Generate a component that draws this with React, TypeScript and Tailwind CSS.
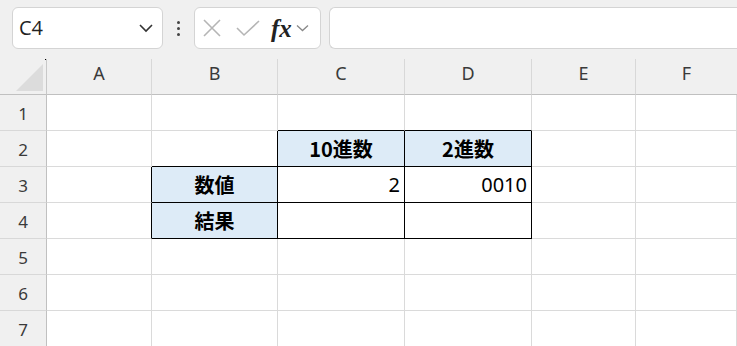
import React from "react";

const cols = ["A", "B", "C", "D", "E", "F"];
const rows = [1, 2, 3, 4, 5, 6, 7];

type CellSpec = { text?: string; blue?: boolean; bold?: boolean; right?: boolean; br?: boolean; bb?: boolean };

const table: Record<string, CellSpec> = {
  C2: { text: "10進数", blue: true, bold: true, br: true, bb: true },
  D2: { text: "2進数", blue: true, bold: true, br: true, bb: true },
  B3: { text: "数値", blue: true, bold: true, br: true, bb: true },
  C3: { text: "2", right: true, br: true, bb: true },
  D3: { text: "0010", right: true, br: true, bb: true },
  B4: { text: "結果", blue: true, bold: true, br: true, bb: true },
  C4: { br: true, bb: true },
  D4: { br: true, bb: true },
  C1: { bb: true },
  D1: { bb: true },
  B2: { br: true, bb: true },
  A3: { br: true },
  A4: { br: true },
};

function Cell({ id }: { id: string }) {
  const s = table[id] || {};
  return (
    <div
      className={
        "box-border border-r border-b flex items-center px-1 text-[20px] text-black " +
        (s.br ? "border-r-black " : "border-r-[#dadada] ") +
        (s.bb ? "border-b-black " : "border-b-[#dadada] ") +
        (s.blue ? "bg-[#ddebf7] " : "bg-white ") +
        (s.bold ? "font-bold justify-center " : "") +
        (s.right ? "justify-end " : "")
      }
      style={{ fontFamily: s.bold ? '"Noto Sans CJK JP", sans-serif' : '"Noto Sans", "Noto Sans CJK JP", sans-serif' }}
    >
      {s.text}
    </div>
  );
}

export default function App() {
  return (
    <div className="w-[737px] h-[346px] overflow-hidden bg-[#f0f0f0] select-none" style={{ fontFamily: '"Noto Sans", sans-serif' }}>
      {/* toolbar */}
      <div className="h-[59px] flex items-start pt-[7px] pl-[12px]">
        <div className="w-[151px] h-[42px] rounded-md border border-[#d4d4d4] bg-white flex items-center pl-[6px] pr-[8px] justify-between">
          <span className="text-[20px] text-[#222]" style={{ fontFamily: '"Open Sans", sans-serif' }}>C4</span>
          <svg width="16" height="10" viewBox="0 0 16 10"><path d="M2 2l6 6 6-6" fill="none" stroke="#333" strokeWidth="1.6" /></svg>
        </div>
        <div className="w-[31px] h-[42px] flex flex-col items-center justify-center gap-[3px]">
          <span className="w-[3px] h-[3px] bg-[#444] rounded-full"></span>
          <span className="w-[3px] h-[3px] bg-[#444] rounded-full"></span>
          <span className="w-[3px] h-[3px] bg-[#444] rounded-full"></span>
        </div>
        <div className="w-[127px] h-[42px] rounded-md border border-[#d4d4d4] bg-white flex items-center">
          <svg className="ml-[7px]" width="20" height="20" viewBox="0 0 20 20"><path d="M2 2l16 16M18 2L2 18" stroke="#b5b5b5" strokeWidth="1.6" fill="none" /></svg>
          <svg className="ml-[13px]" width="26" height="20" viewBox="0 0 26 20"><path d="M2 10l7 7L24 3" stroke="#b5b5b5" strokeWidth="1.6" fill="none" /></svg>
          <span className="ml-[10px] text-[25px] italic font-bold text-[#222] leading-none" style={{ fontFamily: '"Liberation Serif", serif' }}>fx</span>
          <svg className="ml-[4px]" width="13" height="8" viewBox="0 0 13 8"><path d="M1 1.5l5.5 5 5.5-5" stroke="#888" strokeWidth="1.3" fill="none" /></svg>
        </div>
        <div className="ml-[8px] flex-1 h-[42px] rounded-l-md border border-r-0 border-[#d4d4d4] bg-white"></div>
      </div>
      {/* sheet grid */}
      <div className="grid grid-cols-[47px_105px_126px_127px_127px_104px_1fr] grid-rows-[36px_36px_36px_36px_36px_36px_36px_36px]">
        <div className="relative box-border border-r border-b border-r-[#c8c8c8] border-b-[#c0c0c0] bg-[#f0f0f0]">
          <div className="absolute left-[16px] top-[5px] w-[27px] h-[27px] bg-[#dcdcdc]" style={{ clipPath: "polygon(100% 0, 100% 100%, 0 100%)" }}></div>
          <div className="absolute right-0 top-0 w-[1px] h-[1px] bg-black"></div>
        </div>
        {cols.map((c) => (
          <div
            key={c}
            className={"box-border border-b border-b-[#c0c0c0] flex items-center justify-center pb-[7px] text-[18px] text-[#3a3a3a] bg-[#f0f0f0] " + (c === "F" ? "" : "border-r border-r-[#d8d8d8]")}
          >
            {c}
          </div>
        ))}
        {rows.map((r) => (
          <React.Fragment key={r}>
            <div className="box-border border-r border-b border-r-[#c0c0c0] border-b-[#d8d8d8] bg-[#f0f0f0] flex items-center justify-center pt-[3px] text-[17px] text-[#3a3a3a]">
              {r}
            </div>
            {cols.map((c) => (
              <Cell key={c + r} id={c + r} />
            ))}
          </React.Fragment>
        ))}
      </div>
    </div>
  );
}
